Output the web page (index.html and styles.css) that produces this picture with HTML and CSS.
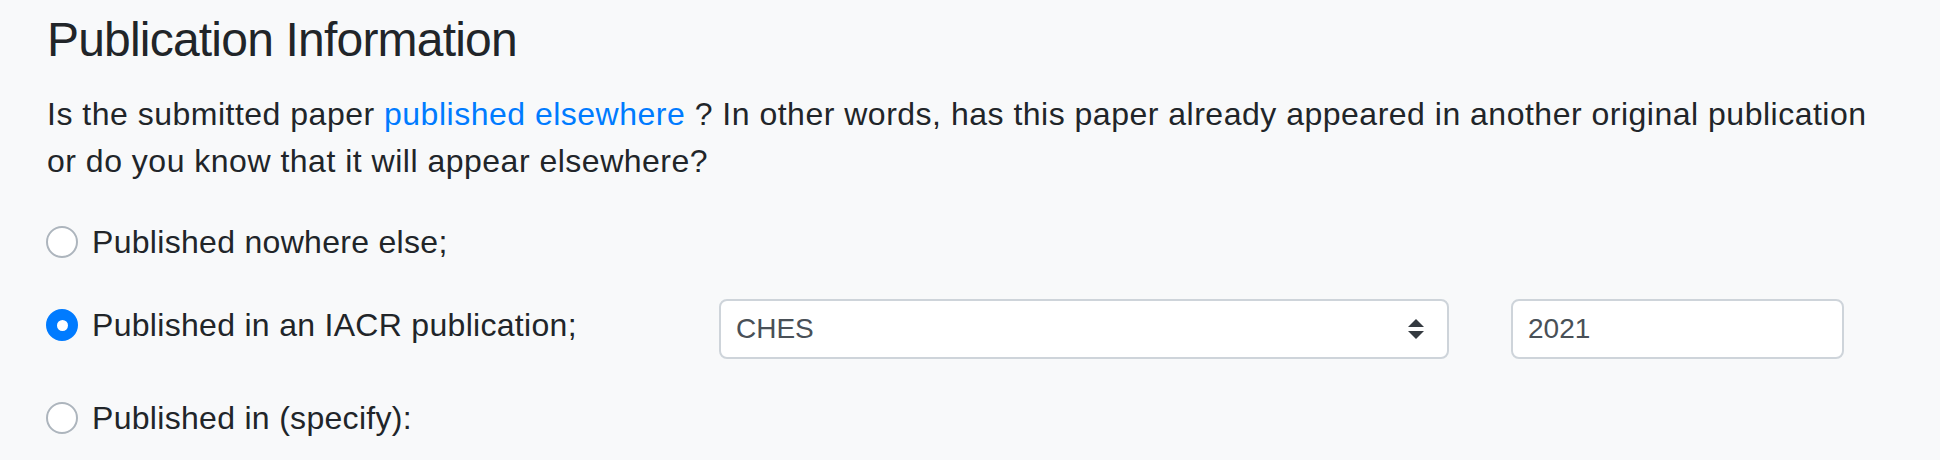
FILE: index.html
```html
<!DOCTYPE html>
<html lang="en">
<head>
<meta charset="utf-8">
<title>Publication Information</title>
<link rel="stylesheet" href="styles.css">
</head>
<body>
<main class="page">
  <h4 class="title">Publication Information</h4>
  <p class="intro">Is the submitted paper <a href="#" class="link">published elsewhere</a> ? In other words, has this paper already appeared in another original publication or do you know that it will appear elsewhere?</p>
  <div class="options">
    <div class="option">
      <label class="radio-label"><span class="radio"></span>Published nowhere else;</label>
    </div>
    <div class="option option-iacr">
      <label class="radio-label radio-label-offset"><span class="radio radio-checked"></span>Published in an IACR publication;</label>
      <div class="select">
        <span class="select-value">CHES</span>
        <svg class="select-arrow" width="16" height="20" viewBox="0 0 4 5" aria-hidden="true"><path d="M2 0L0 2h4zm0 5L0 3h4z" fill="#343a40"/></svg>
      </div>
      <input class="year" type="text" value="2021">
    </div>
    <div class="option option-last">
      <label class="radio-label"><span class="radio"></span>Published in (specify):</label>
    </div>
  </div>
</main>
</body>
</html>
```
FILE: styles.css
```css
html, body {
  margin: 0;
  padding: 0;
  background: #f8f9fa;
}

body {
  font-family: "Liberation Sans", Arial, sans-serif;
  color: #212529;
}

.page {
  padding: 11px 47px 0 47px;
}

.title {
  margin: 0 0 22px 0;
  font-size: 48px;
  line-height: 1.2;
  font-weight: 400;
  letter-spacing: -0.8px;
  color: #212529;
}

.intro {
  margin: 0 0 34px 0;
  font-size: 32px;
  line-height: 47px;
  letter-spacing: 0.5px;
  max-width: 1846px;
}

.link {
  color: #007bff;
  text-decoration: none;
}

.options {
  display: flex;
  flex-direction: column;
  gap: 33px;
}

.option-last {
  margin-top: 3px;
}

.option-iacr {
  display: grid;
  grid-template-columns: 610px 730px 333px;
  column-gap: 62px;
  align-items: start;
}

.radio-label {
  display: flex;
  align-items: center;
  gap: 14px;
  font-size: 32px;
  line-height: 47px;
  letter-spacing: 0.3px;
  color: #212529;
}

.radio-label-offset {
  margin-top: 3px;
}

.radio {
  flex: none;
  box-sizing: border-box;
  width: 32px;
  height: 32px;
  margin-left: -1px;
  border: 2px solid #adb5bd;
  border-radius: 50%;
  background: #fff;
  display: flex;
  align-items: center;
  justify-content: center;
}

.radio-checked {
  background: #007bff;
  border-color: #007bff;
}

.radio-checked::after {
  content: "";
  width: 11px;
  height: 11px;
  border-radius: 50%;
  background: #fff;
}

.select {
  box-sizing: border-box;
  height: 60px;
  display: flex;
  align-items: center;
  justify-content: space-between;
  padding: 0 23px 0 15px;
  background: #fff;
  border: 2px solid #ced4da;
  border-radius: 8px;
  font-size: 28px;
  color: #495057;
}

.select-arrow {
  display: block;
}

.year {
  box-sizing: border-box;
  width: 333px;
  height: 60px;
  margin: 0;
  padding: 0 15px;
  background: #fff;
  border: 2px solid #ced4da;
  border-radius: 8px;
  font-family: "Liberation Sans", Arial, sans-serif;
  font-size: 28px;
  color: #495057;
  outline: none;
}
```
